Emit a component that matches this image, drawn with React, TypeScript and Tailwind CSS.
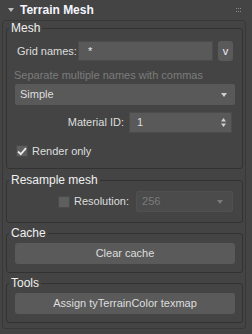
const font = { fontFamily: '"Liberation Sans", Arial, sans-serif' };

function DownArrow({ color = '#d0d0d0' }: { color?: string }) {
  return (
    <svg width="6" height="4" viewBox="0 0 6 4" className="shrink-0">
      <path d="M0 0H6L3 4Z" fill={color} />
    </svg>
  );
}

function Group({ title, children, className = '' }: { title: string; children: React.ReactNode; className?: string }) {
  return (
    <fieldset className={`rounded-[3px] border border-[#323232] ${className}`}>
      <legend className="ml-[2px] px-[2px] text-[12px] leading-[14px] text-[#f0f0f0]">{title}</legend>
      {children}
    </fieldset>
  );
}

function Checkbox({ checked }: { checked: boolean }) {
  return (
    <span className="flex h-[12px] w-[12px] shrink-0 items-center justify-center rounded-[1px] border border-[#4a4a4a] bg-[#5e5e5e]">
      {checked && (
        <svg width="10" height="9" viewBox="0 0 10 9">
          <path d="M1 4.5L3.8 7.2L9 1.2" stroke="#e8e8e8" strokeWidth="1.8" fill="none" />
        </svg>
      )}
    </span>
  );
}

export default function App() {
  return (
    <div className="h-[334px] w-[252px] overflow-hidden bg-[#444444] text-[11px] text-[#dedede]" style={font}>
      {/* header */}
      <div className="flex h-[20px] items-center pl-[8px] pr-[11px]">
        <DownArrow color="#bdbdbd" />
        <span className="ml-[6px] text-[12px] font-bold text-[#f4f6ff]">Terrain Mesh</span>
        <svg width="5" height="4" viewBox="0 0 5 4" className="ml-auto">
          <g fill="#8a8a8a">
            <rect x="0" y="0" width="1" height="1" />
            <rect x="2" y="0" width="1" height="1" />
            <rect x="4" y="0" width="1" height="1" />
            <rect x="0" y="3" width="1" height="1" />
            <rect x="2" y="3" width="1" height="1" />
            <rect x="4" y="3" width="1" height="1" />
          </g>
        </svg>
      </div>

      {/* rollout body */}
      <div className="ml-[2px] w-[244px] rounded-[3px] border border-[#383838] pb-[5px] pl-[3px] pr-[2px]">
        <Group title="Mesh" className="pb-[9px] pt-[6px]">
          <div className="flex items-center pl-[10px]">
            <span className="w-[61px]">Grid names:</span>
            <div className="flex h-[20px] w-[135px] items-center border border-[#4c4c4c] bg-[#595959] pl-[9px] text-[#e8e8e8]">*</div>
            <button className="ml-[5px] flex h-[20px] w-[15px] items-center justify-center rounded-[3px] bg-[#5a5a5a] text-[#eef]">v</button>
          </div>
          <div className="mt-[7px] pl-[7px] leading-[15px] text-[#7c7c7c]">Separate multiple names with commas</div>
          <div className="ml-[8px] mt-[1px] flex h-[21px] w-[220px] items-center justify-between rounded-[2px] bg-[#595959] pl-[5px] pr-[8px]">
            <span>Simple</span>
            <DownArrow />
          </div>
          <div className="mt-[7px] flex items-center justify-end pr-[10px]">
            <span>Material ID:</span>
            <div className="ml-[5px] flex h-[21px] w-[103px] items-center justify-between border border-[#4c4c4c] bg-[#595959] pl-[7px] pr-[5px]">
              <span>1</span>
              <svg width="5" height="9" viewBox="0 0 5 9">
                <path d="M0 3.5H5L2.5 0Z M0 5.5H5L2.5 9Z" fill="#cfcfcf" />
              </svg>
            </div>
          </div>
          <div className="ml-[9px] mt-[10px] flex h-[16px] items-center gap-[4px]">
            <Checkbox checked />
            <span>Render only</span>
          </div>
        </Group>

        <Group title="Resample mesh" className="mt-[4px] pb-[10px] pt-[4px]">
          <div className="flex items-center pl-[51px]">
            <Checkbox checked={false} />
            <span className="ml-[4px]">Resolution:</span>
            <div className="ml-[7px] flex h-[21px] w-[97px] items-center justify-between rounded-[2px] border border-[#505050] bg-[#4b4b4b] pl-[5px] pr-[9px] text-[#7b7b7b]">
              <span>256</span>
              <DownArrow color="#7a7a7a" />
            </div>
          </div>
        </Group>

        <Group title="Cache" className="mt-[3px] pb-[8px] pt-[3px]">
          <button className="ml-[8px] flex h-[21px] w-[220px] items-center justify-center rounded-[3px] bg-[#5a5a5a]">Clear cache</button>
        </Group>

        <Group title="Tools" className="mt-[3px] pb-[8px] pt-[3px]">
          <button className="ml-[8px] flex h-[21px] w-[220px] items-center justify-center rounded-[3px] bg-[#5a5a5a]">Assign tyTerrainColor texmap</button>
        </Group>
      </div>
    </div>
  );
}
